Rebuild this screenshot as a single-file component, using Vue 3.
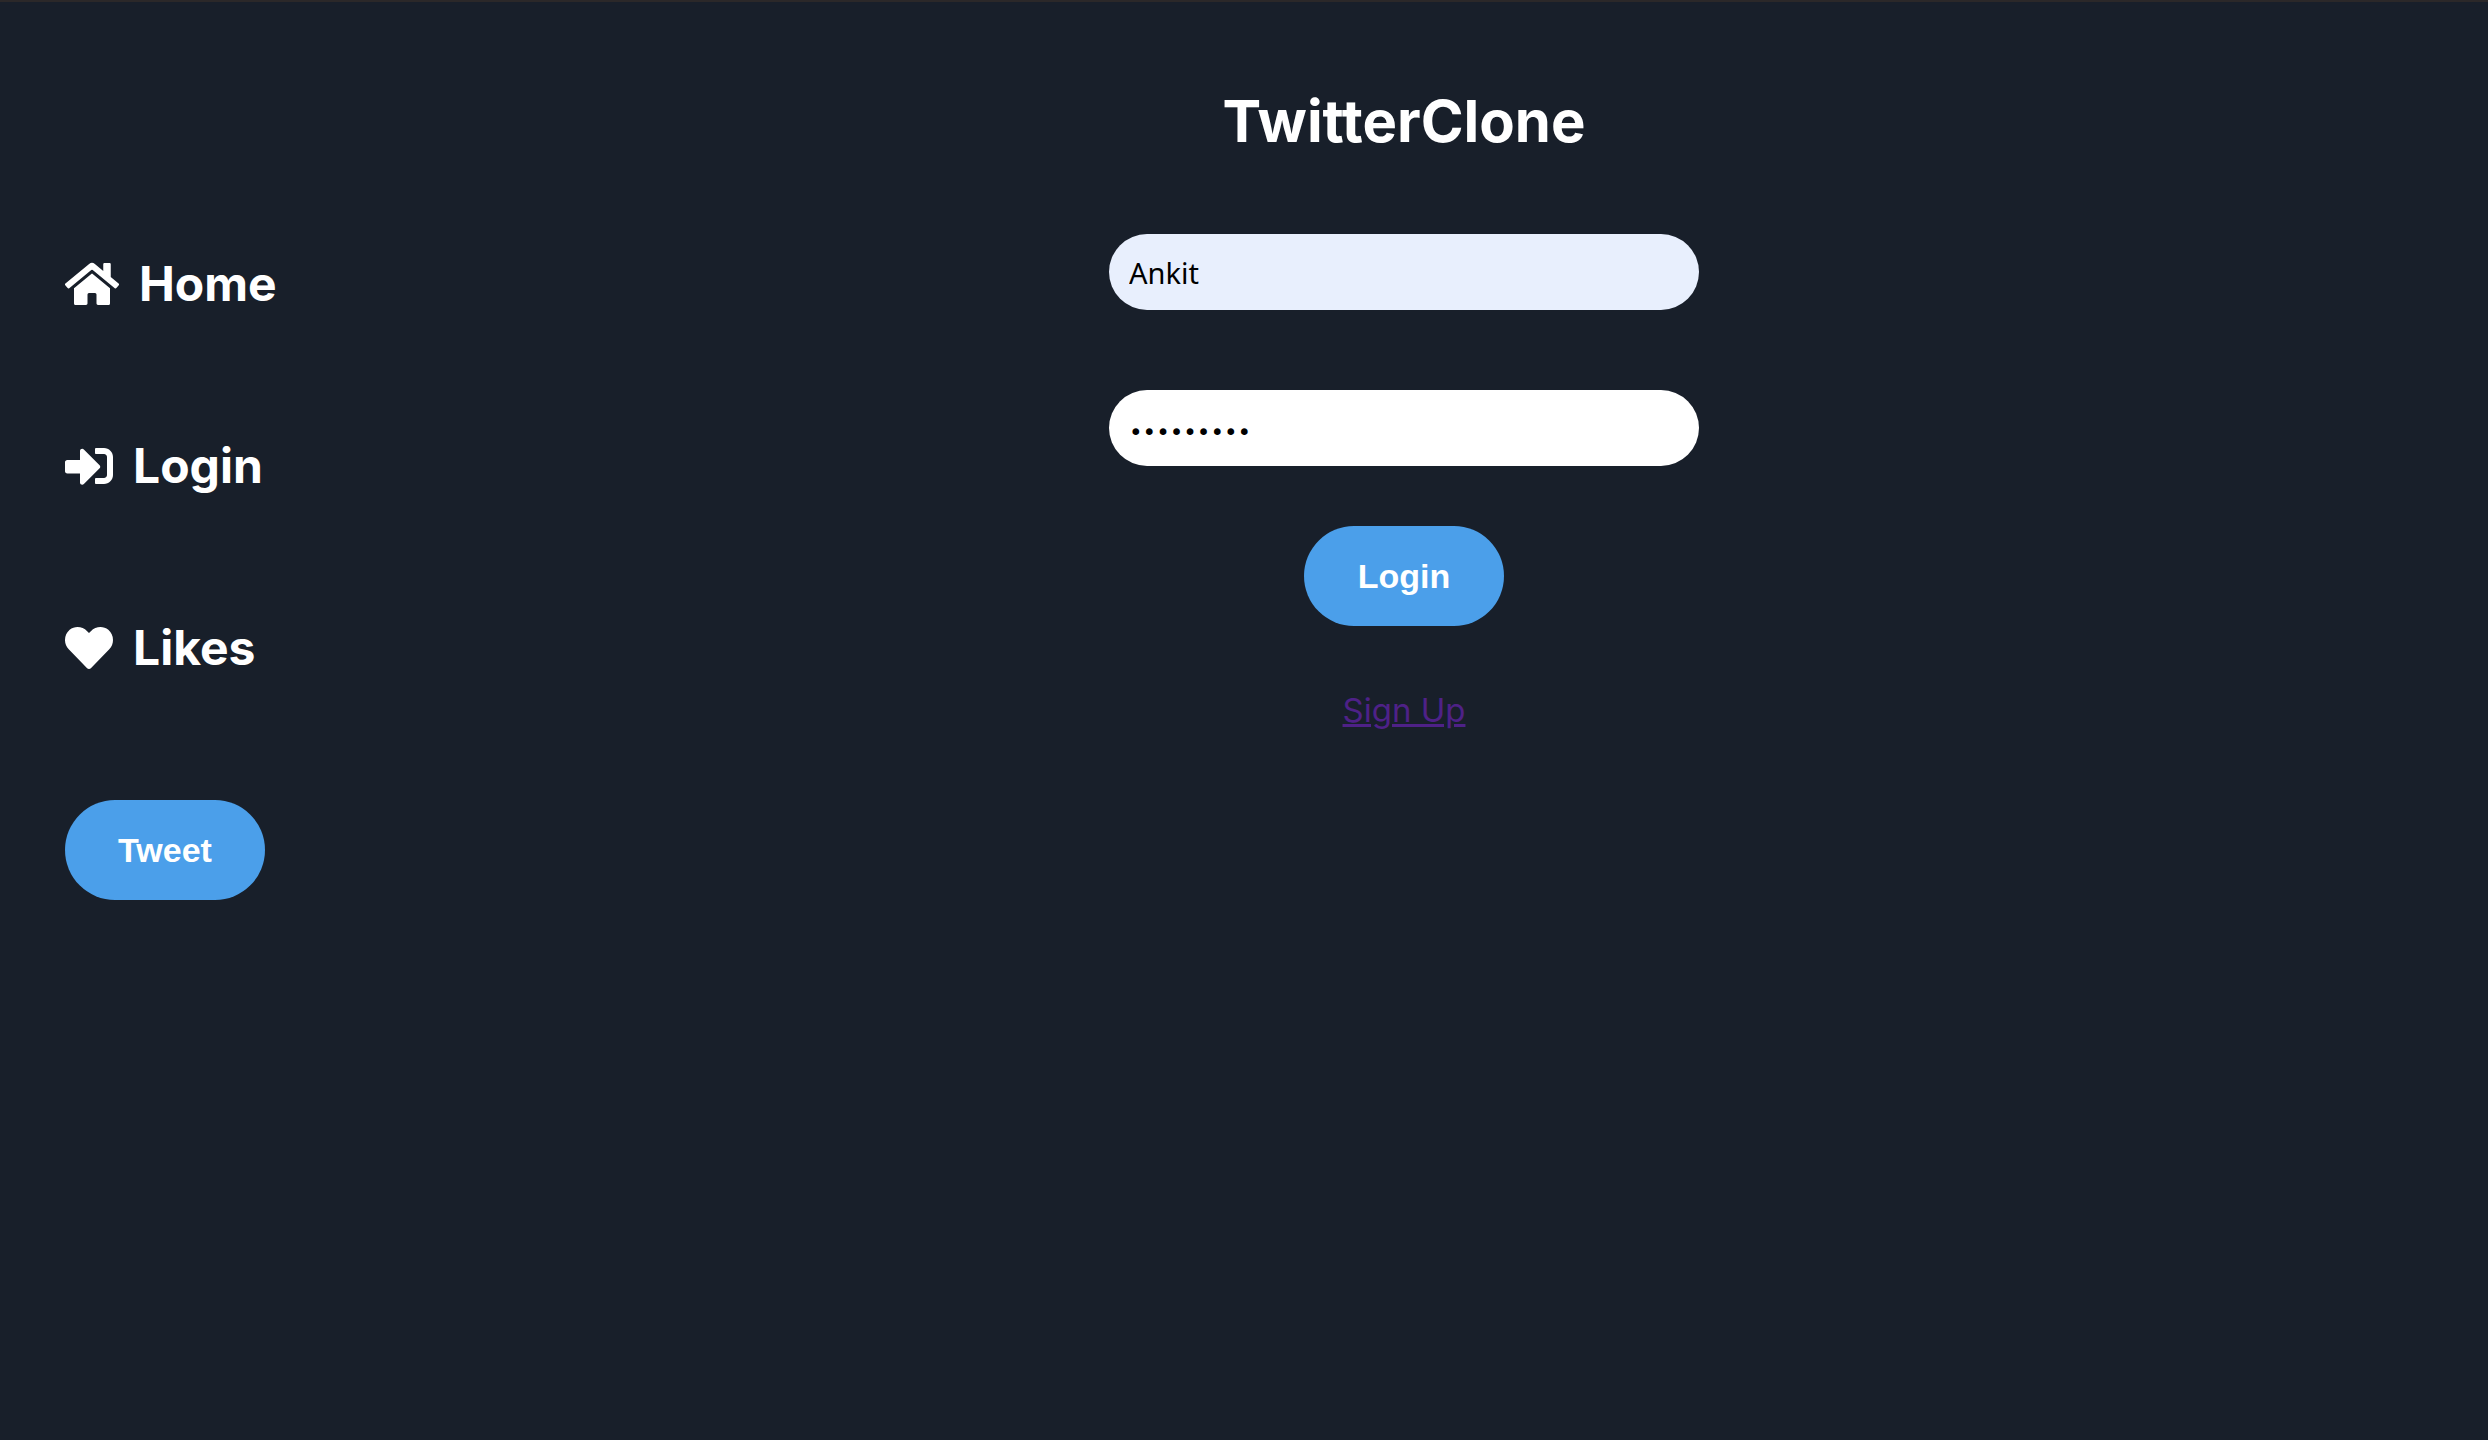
<script setup>
import { ref } from 'vue'

const username = ref('Ankit')
const password = ref('ankit1234')

const links = [
  {
    label: 'Home',
    width: 576,
    path: 'M280.37 148.26L96 300.11V464a16 16 0 0 0 16 16l112.06-.29a16 16 0 0 0 15.92-16V368a16 16 0 0 1 16-16h64a16 16 0 0 1 16 16v95.64a16 16 0 0 0 16 16.05L464 480a16 16 0 0 0 16-16V300L295.67 148.26a12.19 12.19 0 0 0-15.3 0zM571.6 251.47L488 182.56V44.05a12 12 0 0 0-12-12h-56a12 12 0 0 0-12 12v72.61L318.47 43a48 48 0 0 0-61 0L4.34 251.47a12 12 0 0 0-1.6 16.9l25.5 31A12 12 0 0 0 45.15 301l235.22-193.74a12.19 12.19 0 0 1 15.3 0L530.9 301a12 12 0 0 0 16.9-1.6l25.5-31a12 12 0 0 0-1.7-16.93z',
  },
  {
    label: 'Login',
    width: 512,
    path: 'M416 448h-84c-6.6 0-12-5.4-12-12v-40c0-6.6 5.4-12 12-12h84c17.7 0 32-14.3 32-32V160c0-17.7-14.3-32-32-32h-84c-6.6 0-12-5.4-12-12V76c0-6.6 5.4-12 12-12h84c53 0 96 43 96 96v192c0 53-43 96-96 96zm-47-201L201 79c-15-15-41-4.5-41 17v96H24c-13.3 0-24 10.7-24 24v96c0 13.3 10.7 24 24 24h136v96c0 21.5 26 32 41 17l168-168c9.3-9.4 9.3-24.6 0-34z',
  },
  {
    label: 'Likes',
    width: 512,
    path: 'M462.3 62.6C407.5 15.9 326 24.3 275.7 76.2L256 96.5l-19.7-20.3C186.1 24.3 104.5 15.9 49.7 62.6c-62.8 53.6-66.1 149.8-9.9 207.9l193.5 199.8c12.5 12.9 32.8 12.9 45.3 0l193.5-199.8c56.3-58.1 53-154.3-9.8-207.9z',
  },
]
</script>

<template>
  <div class="page">
    <nav class="sidebar">
      <a v-for="link in links" :key="link.label" href="#" class="nav-link">
        <svg class="nav-icon" :viewBox="`0 0 ${link.width} 512`" aria-hidden="true">
          <path :d="link.path" fill="currentColor" />
        </svg>
        <span>{{ link.label }}</span>
      </a>
      <button type="button" class="pill">Tweet</button>
    </nav>

    <main class="content">
      <h1 class="title">TwitterClone</h1>
      <form class="form" @submit.prevent>
        <input v-model="username" class="field" type="text" aria-label="Username" autocomplete="off" />
        <input v-model="password" class="field secret" type="password" aria-label="Password" autocomplete="off" />
        <button type="submit" class="pill">Login</button>
      </form>
      <a href="#" class="signup">Sign Up</a>
    </main>
  </div>
</template>

<style>
body {
  background: #181f2a;
}
</style>

<style scoped>
.page {
  box-sizing: border-box;
  display: flex;
  min-height: 100vh;
  border-top: 2px solid #2b2829;
  background: #181f2a;
  color: #fff;
  font-family: Inter, "Liberation Sans", sans-serif;
}

.sidebar {
  box-sizing: border-box;
  display: flex;
  flex: none;
  flex-direction: column;
  align-items: flex-start;
  gap: 122px;
  width: 320px;
  padding: 252px 0 0 65px;
}

.nav-link {
  display: flex;
  align-items: center;
  gap: 20px;
  height: 60px;
  color: #fff;
  font-size: 48px;
  font-weight: 700;
  line-height: 62px;
  text-decoration: none;
}

.nav-icon {
  display: block;
  width: auto;
  height: 48px;
}

.pill {
  width: 200px;
  height: 100px;
  padding: 0;
  border: 0;
  border-radius: 50px;
  background: #4b9fea;
  color: #fff;
  font: bold 34px "Liberation Sans", Arial, sans-serif;
  cursor: pointer;
}

.content {
  display: flex;
  flex: 1;
  flex-direction: column;
  align-items: center;
  min-width: 0;
  padding-top: 83px;
}

.title {
  margin: 0 0 77px;
  font-size: 58px;
  font-weight: 700;
  line-height: 72px;
}

.form {
  display: flex;
  flex-direction: column;
  align-items: center;
  width: 590px;
  max-width: 100%;
}

.field {
  box-sizing: border-box;
  width: 100%;
  height: 76px;
  margin: 0 0 80px;
  padding: 0 20px;
  border: 0;
  border-radius: 38px;
  outline: 0;
  background: #e8effd;
  color: #000;
  font-family: "Noto Sans", sans-serif;
  font-size: 29px;
}

.secret {
  margin-bottom: 60px;
  padding-top: 8px;
  background: #fff;
  font-family: "DejaVu Sans", sans-serif;
  font-size: 23px;
}

.signup {
  margin-top: 64px;
  color: #4e2187;
  font-size: 33px;
  line-height: 40px;
}
</style>
